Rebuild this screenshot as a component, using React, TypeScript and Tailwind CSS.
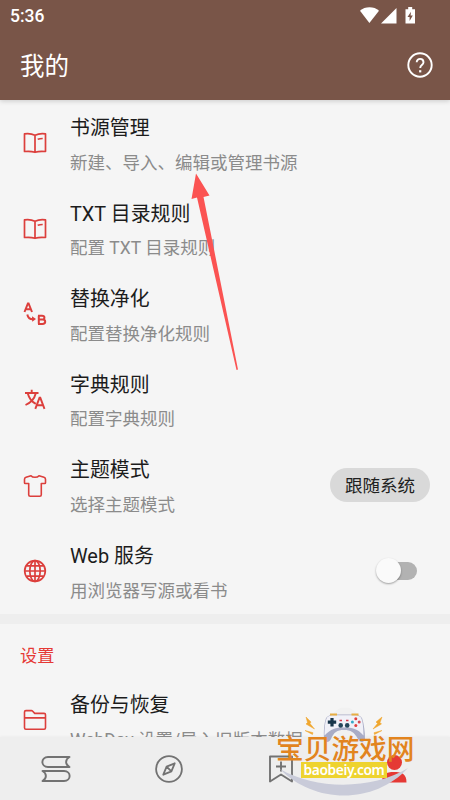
import React from "react";

const cjk = "font-['Roboto','Noto_Sans_CJK_SC',sans-serif]";

function BookIcon() {
  return (
    <svg width="24" height="22" viewBox="0 0 24 22" fill="none" stroke="#dc3f3c" strokeWidth="1.7" strokeLinejoin="round">
      <path d="M12 3.300C9 1.800 5 1.400 1.500 1.900v17.600c3.500-.4 7.500-.2 10.500.8 3-1 7-1.200 10.500-.8V1.900C19 1.400 15 1.800 12 3.300zM12 3.300v17" />
      <path d="M14.700 7.200c1.600-.5 3.200-.7 5-.7" />
    </svg>
  );
}

function ReplaceIcon() {
  return (
    <svg width="24" height="24" viewBox="0 0 24 24" fill="none" stroke="#dc3f3c" strokeWidth="2">
      <path d="M1.500 10 4.900 1.500h.7L9 10M2.900 7.200h4.800" />
      <path d="M15.800 13.800v8M15 13.800h4c3.200 0 3.200 3.700 0 3.800h-3 3.500c3.600 0 3.600 4.300 0 4.300H15" />
      <path d="M4.300 12.500c.6 3 2.500 4.700 5.500 4.700" />
      <path d="M9 14.200l4 2.900-3.800 2.600z" fill="#dc3f3c" stroke="none" />
    </svg>
  );
}

function TranslateIcon() {
  return (
    <svg width="24" height="24" viewBox="0 0 24 24" fill="none" stroke="#dc3f3c" strokeWidth="1.900">
      <path d="M2 5h13.500M8.700 1.800V5M4.800 5.500c1.300 5 4.500 8.600 8 10.300M12.700 5.500C11.500 10.500 7.500 14.800 2.500 17" />
      <path d="M12.300 20.800 16.500 9.800h.8l4.200 11M13.700 17.300h6.500" />
    </svg>
  );
}

function ShirtIcon() {
  return (
    <svg width="24" height="24" viewBox="0 0 24 24" fill="none" stroke="#dc3f3c" strokeWidth="1.600" strokeLinejoin="round">
      <path d="M8 1.700c1.600 2.100 6.400 2.100 8 0l5 1.500c1 .3 1.500 1 1.500 2v3.600c0 .5-.3.700-.8.700h-3.400v11.300c0 1-.5 1.500-1.500 1.500H7.200c-1 0-1.500-.5-1.500-1.500V9.500H2.300c-.5 0-.8-.2-.8-.7V5.200c0-1 .5-1.700 1.500-2z" />
    </svg>
  );
}

function GlobeIcon() {
  return (
    <svg width="24" height="24" viewBox="0 0 24 24" fill="none" stroke="#dc3f3c" strokeWidth="1.700">
      <circle cx="12" cy="12" r="10.300" />
      <ellipse cx="12" cy="12" rx="5.200" ry="10.300" />
      <path d="M12 1.700v20.600M1.700 12h20.600M3.400 6.900h17.200M3.400 17.100h17.200" />
    </svg>
  );
}

function FolderIcon() {
  return (
    <svg width="24" height="22" viewBox="0 0 24 22" fill="none" stroke="#dc3f3c" strokeWidth="1.600" strokeLinejoin="round">
      <path d="M1.500 18.800V3c0-.9.500-1.400 1.400-1.400h5.600c.5 0 .8.200 1.200.6l2 2.200h9.400c.9 0 1.400.5 1.400 1.400v13c0 .9-.5 1.400-1.400 1.400H2.900c-.9 0-1.400-.5-1.400-1.400zM1.500 8.900h21" />
    </svg>
  );
}

type RowProps = {
  icon: React.ReactNode;
  title: string;
  note: string;
  children?: React.ReactNode;
};

function Row({ icon, title, note, children }: RowProps) {
  return (
    <div className="flex h-[85.600px] shrink-0 items-center pl-[23px] pr-5">
      <div className="flex w-[47px] shrink-0 items-center pt-px">{icon}</div>
      <div className="flex grow flex-col whitespace-nowrap pt-[5px]">
        <div className="h-[34.500px] text-[19.900px] leading-[35px] text-[#1c1c1c]">{title}</div>
        <div className="h-[34px] text-[17.500px] leading-[34px] text-[#8b8b8b]">{note}</div>
      </div>
      {children}
    </div>
  );
}

function Watermark() {
  return (
    <div className="absolute left-[275px] top-[705px] h-[95px] w-[140px]">
      <svg className="absolute inset-0" width="140" height="95" viewBox="0 0 140 95">
        <circle cx="70" cy="17" r="14.500" fill="#f1f1f1" />
        <path d="M5 64c36 21 92 21 128-1-34 37-94 36-128 1z" fill="#c9cbd9" />
        <path d="M51 13c2-3 7-4 12-3.500h13c5-.5 9 .5 11 3.500 2 6 3 14 3 21-1 4-5 4-7 0-4-7-7-9-14-9s-10 2-13 9c-2 4-6 4-7 0-.5-8 0-15 2-21z" fill="#a9acc6" />
        <path d="M52 12.500c2-2.500 6-2.500 10-2.200h14c4-.3 8-.3 10 2.200 2 4 2.500 12 2.500 18-6-7-11-8-19.500-8S56 24 49.500 30.500c0-6 .5-14 2.500-18z" fill="#f1f1f8" />
        <path d="M55 9.500h7M76.500 9.500h7" stroke="#e8ae42" strokeWidth="2" />
        <path d="M57 13v8.400M52.800 17.200h8.400" stroke="#17354a" strokeWidth="3.200" />
        <circle cx="65.700" cy="20.400" r="2.300" fill="#24465a" />
        <circle cx="72.200" cy="20.400" r="2.300" fill="#24465a" />
        <path d="M64.500 15.500h2.500M71 15.500h2.500" stroke="#d53b4b" strokeWidth="1.300" />
        <circle cx="80.800" cy="13.700" r="1.500" fill="#e23e3e" />
        <circle cx="80.800" cy="20.500" r="1.500" fill="#e23e3e" />
        <circle cx="77.400" cy="17.100" r="1.500" fill="#36a9c7" />
        <circle cx="84.200" cy="17.100" r="1.500" fill="#d34b55" />
        <path d="M31 12l5 5-1 1.500 4.500 5.500-8.500-5 1.500-1.500zM30 25.500l8 2.200-.5 1.800zM107 12l-6 5 1.500 1.500L98 24l8.500-5-1.500-1.500zM107 25.500l-8 2.200.5 1.800z" fill="#f0a72f" stroke="#f0a72f" strokeWidth=".5" />
      </svg>
      <div className="absolute left-[1px] top-[24px] h-[36px] whitespace-nowrap font-['Noto_Sans_CJK_SC',sans-serif] text-[27.700px] font-medium leading-[36px] text-[#e2841e]">宝贝游戏网</div>
      <div className="absolute left-[26px] top-[57px] flex h-[16px] w-[86px] items-center justify-center bg-[#eed32f] font-['Noto_Sans',sans-serif] text-[13.800px] font-semibold leading-[16px] tracking-[-0.400px] text-white">
        baobeiy.com
      </div>
    </div>
  );
}

export default function App() {
  return (
    <div className={`relative flex h-[800px] w-[450px] flex-col overflow-hidden bg-[#f5f5f5] ${cjk}`}>
      <header className="z-10 flex h-[100px] shrink-0 flex-col bg-[#795548] text-white shadow-[0_1px_5px_rgba(0,0,0,0.180)]">
        <div className="flex h-[31px] items-center justify-between pl-[10px] pr-[34px]">
          <span className="pt-px text-[17.500px] font-medium leading-[31px]">5:36</span>
          <svg width="58" height="20" viewBox="0 0 58 20" fill="#fff">
            <path d="M2 4.800c5-4.600 14-4.600 19 0L11.400 17z" />
            <path d="M38.500 2v15.500H23z" />
            <path d="M47.500 3.200h2.700V1h4v2.200H57V17.500h-9.500z" />
            <path d="M53 5.700l-3.500 5.200h2.100v4.100l3.200-5.500h-2.200z" fill="#795548" />
          </svg>
        </div>
        <div className="flex h-[69px] items-center justify-between pl-5 pr-[17px]">
          <h1 className="pt-[2px] text-[24.500px] leading-[40px]">我的</h1>
          <svg width="26" height="26" viewBox="0 0 26 26" fill="none" stroke="#fff" strokeWidth="1.900" className="mt-[-1px]">
            <circle cx="13" cy="13" r="11.700" />
            <path d="M9.700 10.300c0-4.600 6.800-4.500 6.800 0 0 2.900-3.300 2.700-3.300 5.700" />
            <path d="M12.100 19.300h2.200" strokeWidth="2.200" />
          </svg>
        </div>
      </header>

      <main className="flex h-[637px] shrink-0 flex-col overflow-hidden">
        <Row icon={<BookIcon />} title="书源管理" note="新建、导入、编辑或管理书源" />
        <Row icon={<BookIcon />} title="TXT 目录规则" note="配置 TXT 目录规则" />
        <Row icon={<ReplaceIcon />} title="替换净化" note="配置替换净化规则" />
        <Row icon={<TranslateIcon />} title="字典规则" note="配置字典规则" />
        <Row icon={<ShirtIcon />} title="主题模式" note="选择主题模式">
          <div className="flex h-[34px] w-[100px] items-center justify-center rounded-full bg-[#d9d9d9] pt-px text-[17.500px] text-[#202020]">跟随系统</div>
        </Row>
        <Row icon={<GlobeIcon />} title="Web 服务" note="用浏览器写源或看书">
          <div className="mr-[13px] flex h-[18px] w-[36px] items-center rounded-full bg-[#b2b2b2]">
            <div className="ml-[-5px] size-[25px] shrink-0 rounded-full bg-[#fafafa] shadow-[0_1px_2px_rgba(0,0,0,0.350)]" />
          </div>
        </Row>
        <div className="h-[10px] shrink-0 bg-[#eeeeee]" />
        <div className="flex h-[53.500px] shrink-0 items-center pl-5 pt-[14px] text-[17.200px] text-[#e53935]">设置</div>
        <Row icon={<FolderIcon />} title="备份与恢复" note="WebDav 设置/导入旧版本数据" />
      </main>

      <nav className="grid h-[63px] shrink-0 grid-cols-4 items-center justify-items-center bg-[#eeeeee] shadow-[0_0_3px_rgba(0,0,0,0.060)]">
        <svg width="30" height="28" viewBox="0 0 30 28" fill="none" stroke="#727272" strokeWidth="1.900" strokeLinejoin="round">
          <path d="M28.500 2H7C-.5 2-.5 12 7 12h21.500c-4.500-2.500-4.500-7.500 0-10zM1.500 16H23c7.500 0 7.500 10 0 10H1.500c4.500-2.500 4.500-7.500 0-10z" />
        </svg>
        <svg width="28" height="28" viewBox="0 0 28 28" fill="none" stroke="#727272" strokeWidth="1.800" strokeLinejoin="round">
          <circle cx="14" cy="14" r="12.900" />
          <path d="M19.700 8.300l-3.300 8.100-8.100 3.300 3.300-8.100zM11.600 11.600l4.800 4.800" />
        </svg>
        <svg width="26" height="28" viewBox="0 0 26 28" fill="none" stroke="#727272" strokeWidth="1.900" strokeLinejoin="round">
          <path d="M2 1.500h22v25l-11-7-11 7zM13 6.500v10M8 11.500h10" />
        </svg>
        <svg width="26" height="28" viewBox="0 0 26 28" fill="#e53935">
          <circle cx="13.500" cy="7.500" r="7.500" />
          <path d="M1 27.500c0-9 4-10.500 12-10.500s12.500 2 12.500 10.500z" />
        </svg>
      </nav>

      <svg className="absolute left-[185px] top-[170px]" width="60" height="205" viewBox="0 0 60 205" fill="#fb5352">
        <path d="M11 3.500 24.500 25.500l-6 1.400L53 199.500l-1.500.5L12 27.500l-5.500 1.500z" />
      </svg>
      <Watermark />
    </div>
  );
}
